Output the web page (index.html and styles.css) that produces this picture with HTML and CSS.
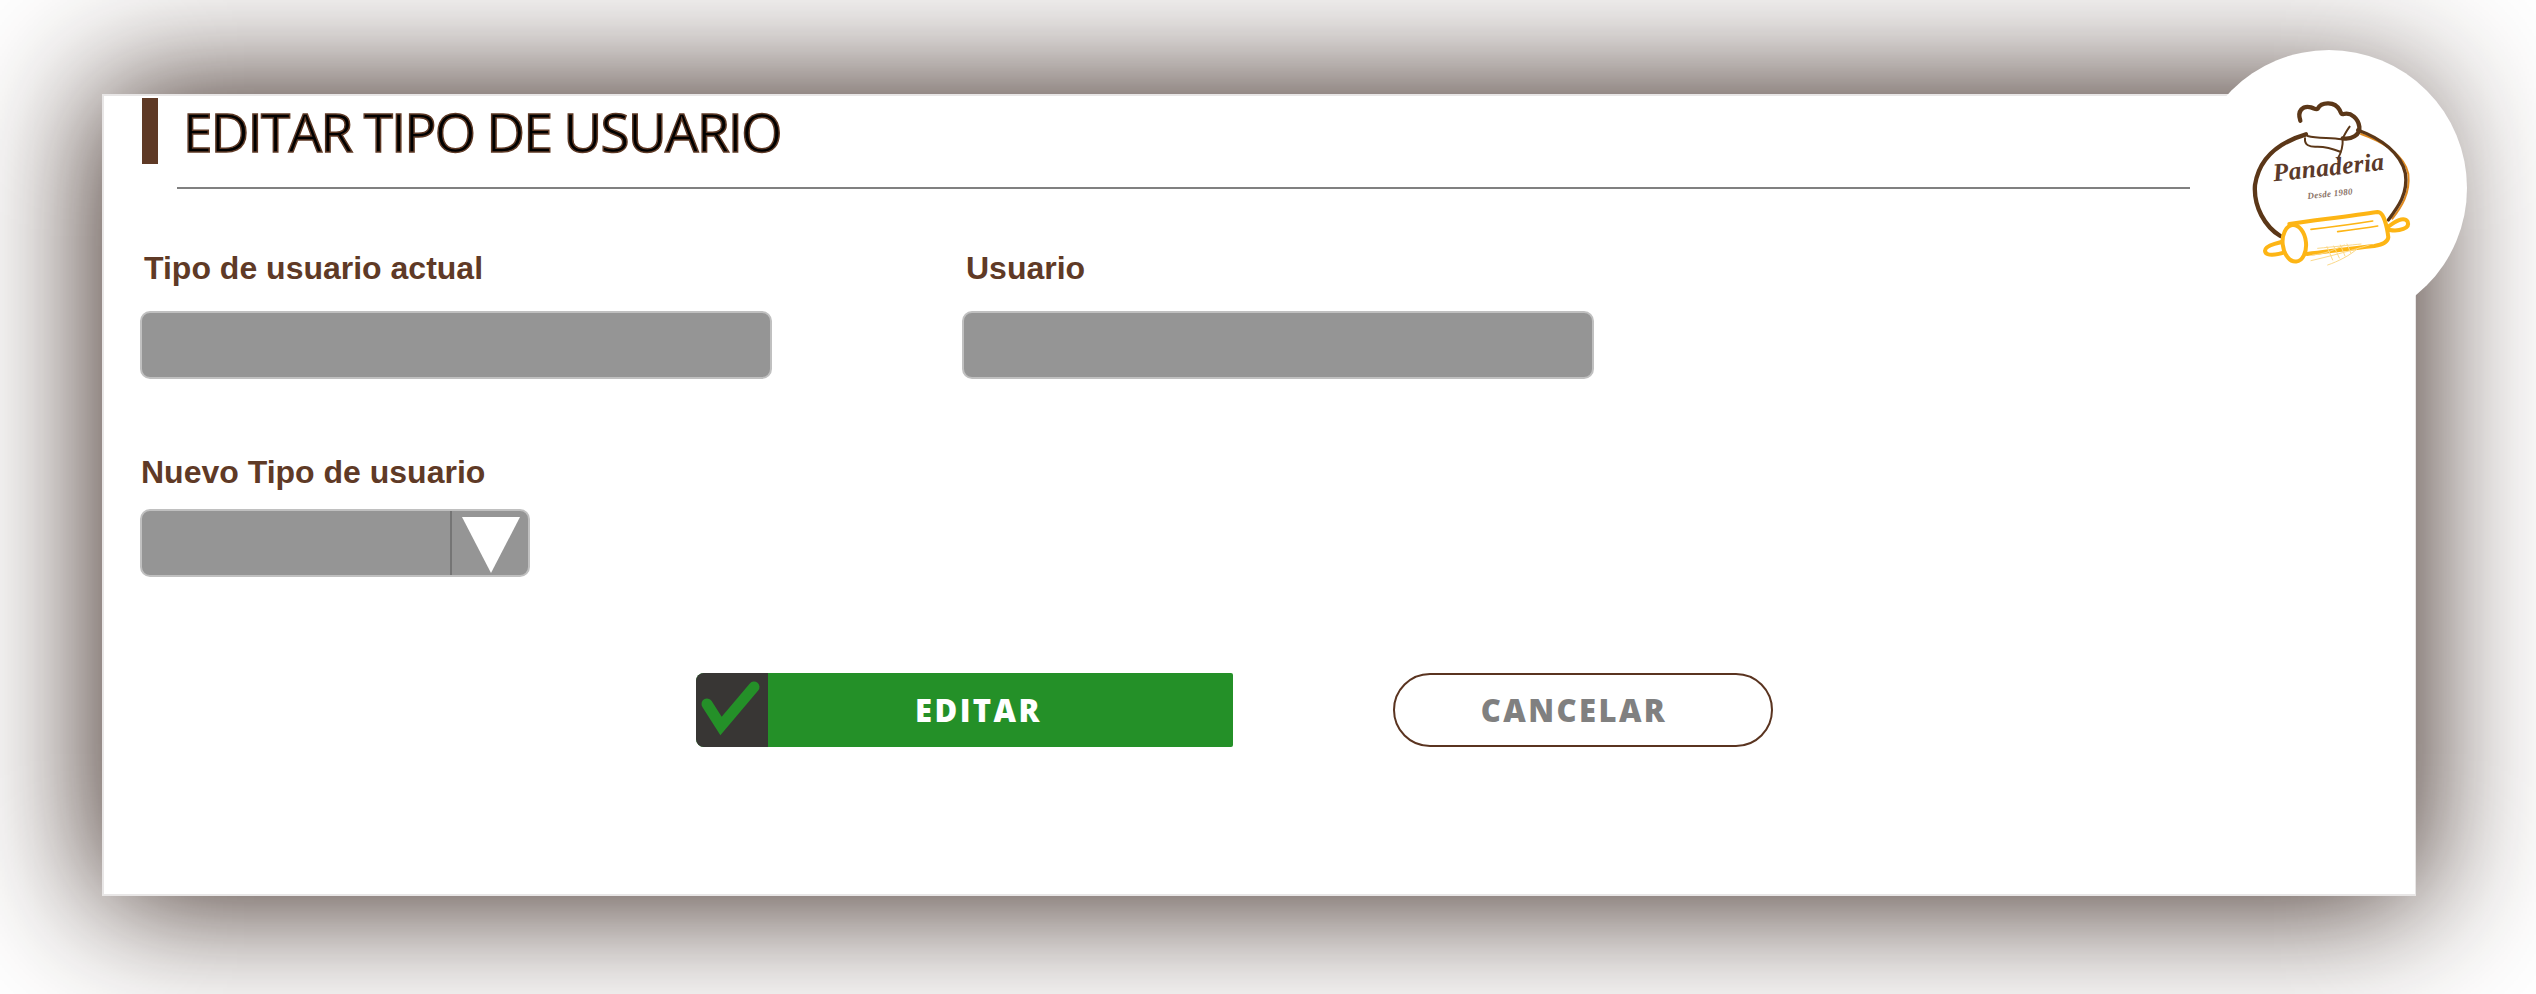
FILE: index.html
```html
<!DOCTYPE html>
<html lang="es">

<head>
    <meta charset="UTF-8">
    <meta name="viewport" content="width=device-width, initial-scale=1.0">
    <title>Editar tipo de usuario</title>
    <link rel="stylesheet" href="styles.css">
</head>

<body>
    <div class="card">
        <div class="logo">
            <svg class="logo-img" viewBox="90 60 828 828">
                <!-- ring -->
                <path class="ring-o" d="M600 312C670 336 732 378 742 432C748 490 722 530 694 566"/>
                <path class="ring" d="M435 313C360 335 295 380 282 465C277 530 312 590 358 618"/>
                <path class="ring ring-der" d="M590 300C660 325 720 370 733 430C742 490 712 530 682 570"/>
                <!-- hat -->
                <path class="hat" d="M418 272C408 242 425 226 450 232C462 236 466 240 470 236C482 214 522 214 536 240C540 250 542 254 548 252C570 246 592 266 595 290C598 315 570 330 545 325"/>
                <path class="hat-thin" d="M545 325C552 312 558 300 566 290M440 318C470 326 510 322 542 328M432 325C430 345 445 352 470 350C495 350 520 358 540 366M545 325C546 345 540 370 530 386"/>
                <text class="logo-name" x="338" y="454" textLength="335" transform="rotate(-6 338 454)">Panaderia</text>
                <text class="logo-year" x="440" y="507" textLength="136" transform="rotate(-6 440 507)">Desde 1980</text>
                <!-- rolling pin -->
                <path class="pin" d="M385 582C470 570 570 558 650 546C668 545 678 590 682 622C680 640 660 645 640 648C570 655 500 665 438 672"/>
                <path class="pin" d="M682 590C702 575 728 558 740 575C748 595 715 605 686 600"/>
                <path class="pin" d="M398 632C360 634 312 645 312 662C314 680 345 676 378 664"/>
                <ellipse class="pin" cx="400" cy="640" rx="35" ry="55" transform="rotate(-6 400 640)"/>
                <path class="pin-thin" d="M450 598C520 590 580 582 635 573M530 605C570 600 610 595 650 588"/>
                <path class="wheat" d="M450 692C500 680 560 665 625 645M470 655C520 650 570 645 600 642M455 675C490 672 520 660 550 645M500 705C530 695 570 675 590 655M498 650L515 690M518 648L535 684M538 645L552 678M558 642L570 670"/>
            </svg>
        </div>

        <div class="titulo">
            <span class="titulo-barra"></span>
            <h1>EDITAR TIPO DE USUARIO</h1>
        </div>
        <div class="titulo-linea"></div>

        <form class="form">
            <div class="fila">
                <div class="campo">
                    <label class="etiqueta">Tipo de usuario actual</label>
                    <div class="caja"></div>
                </div>
                <div class="campo">
                    <label class="etiqueta">Usuario</label>
                    <div class="caja"></div>
                </div>
            </div>

            <label class="etiqueta etiqueta-nuevo">Nuevo Tipo de usuario</label>
            <div class="caja combo">
                <div class="combo-flecha"><span class="triangulo"></span></div>
            </div>

            <div class="botones">
                <button type="button" class="btn-editar">
                    <span class="btn-icono">
                        <svg width="72" height="74" viewBox="0 0 72 74">
                            <path class="check" d="M11 31L25 53L58 14"/>
                        </svg>
                    </span>
                    <span class="btn-texto">EDITAR</span>
                </button>
                <button type="button" class="btn-cancelar">CANCELAR</button>
            </div>
        </form>
    </div>
</body>

</html>
```

FILE: styles.css
```css
body {
    margin: 0;
    background-color: white;
    height: 994px;
    overflow: hidden;
    font-family: 'Liberation Sans', Arial, sans-serif;
}

.card {
    position: relative;
    box-sizing: border-box;
    width: 2314px;
    height: 802px;
    margin: 94px 0 0 102px;
    padding: 2px 0 0 38px;
    background-color: white;
    border: 2px solid #e8e6e6;
    border-right-width: 1px;
    box-shadow: 0 0 130px 6px rgba(45, 25, 18, 0.95);
}

.logo {
    position: absolute;
    top: -46px;
    right: -52px;
    width: 276px;
    height: 276px;
    border-radius: 50%;
    background-color: white;
}

.logo-img {
    display: block;
    width: 276px;
    height: 276px;
}

.ring,
.ring-o,
.hat,
.hat-thin,
.pin,
.pin-thin,
.wheat {
    fill: none;
    stroke-linecap: round;
}

.ring {
    stroke: #5b3718;
    stroke-width: 13;
}

.ring-der {
    stroke-width: 10;
}

.ring-o {
    stroke: #e08a20;
    stroke-width: 6;
}

.hat {
    stroke: #5b3718;
    stroke-width: 13;
}

.hat-thin {
    stroke: #5b3718;
    stroke-width: 6;
}

.pin {
    stroke: #fdb515;
    stroke-width: 12;
    fill: white;
}

.pin-thin {
    stroke: #fdb515;
    stroke-width: 5;
}

.wheat {
    stroke: #fbd98a;
    stroke-width: 3;
}

.logo-name {
    font-family: 'Liberation Serif', serif;
    font-style: italic;
    font-weight: bold;
    font-size: 76px;
    fill: #5b3a2a;
}

.logo-year {
    font-family: 'Liberation Serif', serif;
    font-style: italic;
    font-weight: bold;
    font-size: 27px;
    fill: #8b7468;
}

.titulo {
    display: flex;
    align-items: center;
    height: 66px;
}

.titulo-barra {
    width: 16px;
    height: 66px;
    background-color: #5f3a26;
}

.titulo h1 {
    margin: 0 0 0 25px;
    font-family: 'Open Sans', sans-serif;
    font-size: 53px;
    font-weight: 400;
    letter-spacing: -1.6px;
    color: black;
    -webkit-text-stroke: 1.5px #5f3a26;
}

.titulo-linea {
    width: 2013px;
    height: 2px;
    margin: 23px 0 0 35px;
    background-color: #808080;
}

.form {
    margin-left: -2px;
    padding-top: 62px;
}

.fila {
    display: flex;
    gap: 190px;
}

.campo {
    width: 632px;
}

.etiqueta {
    display: block;
    margin-left: 4px;
    font-size: 32px;
    font-weight: bold;
    line-height: 34px;
    color: #5f3a26;
}

.caja {
    box-sizing: border-box;
    width: 632px;
    height: 68px;
    margin-top: 26px;
    background-color: #959595;
    border: 2px solid #c0c0c0;
    border-radius: 10px;
}

.etiqueta-nuevo {
    margin: 76px 0 0 1px;
}

.combo {
    width: 390px;
    margin-top: 20px;
    display: flex;
    justify-content: flex-end;
}

.combo-flecha {
    box-sizing: border-box;
    width: 78px;
    border-left: 2px solid #757575;
    padding: 6px 0 0 10px;
}

.triangulo {
    display: block;
    width: 0;
    height: 0;
    border-left: 29px solid transparent;
    border-right: 29px solid transparent;
    border-top: 56px solid white;
}

.botones {
    display: flex;
    gap: 160px;
    margin: 96px 0 0 556px;
}

.btn-editar {
    display: flex;
    width: 537px;
    height: 74px;
    padding: 0;
    border: none;
    border-radius: 8px 2px 2px 8px;
    overflow: hidden;
    background-color: #249028;
    font-family: 'Open Sans', sans-serif;
}

.btn-icono {
    width: 72px;
    height: 74px;
    background-color: #383634;
}

.check {
    fill: none;
    stroke: #249028;
    stroke-width: 11;
    stroke-linecap: round;
}

.btn-texto {
    flex: 1;
    padding-right: 44px;
    font-size: 31px;
    font-weight: 800;
    line-height: 74px;
    letter-spacing: 2.4px;
    text-align: center;
    color: white;
}

.btn-cancelar {
    box-sizing: border-box;
    width: 380px;
    height: 74px;
    padding: 0 18px 0 0;
    background-color: white;
    border: 2px solid #5a3420;
    border-radius: 37px;
    font-family: 'Open Sans', sans-serif;
    font-size: 31px;
    font-weight: 800;
    letter-spacing: 2.4px;
    color: #808080;
}
```
